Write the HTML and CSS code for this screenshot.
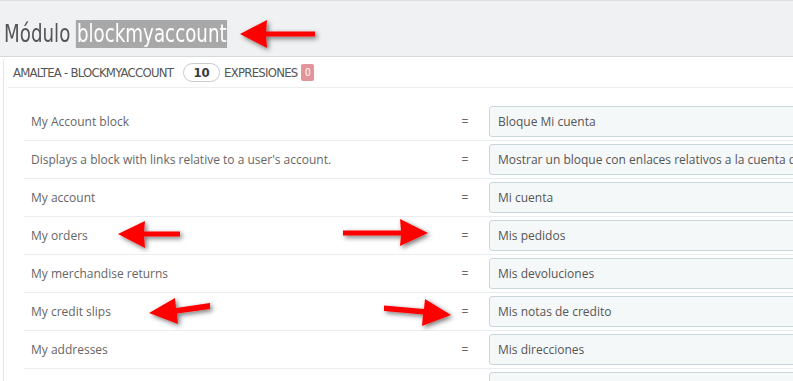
FILE: index.html
```html
<!DOCTYPE html>
<html lang="es">
<head>
    <meta charset="UTF-8">
    <title>Módulo blockmyaccount</title>
    <link rel="stylesheet" href="styles.css">
</head>
<body>
    <div class="page-head">
        <h2 class="page-title">Módulo <span class="hl">blockmyaccount</span></h2>
    </div>

    <div class="panel">
        <div class="panel-heading">
            <span>AMALTEA - BLOCKMYACCOUNT</span>
            <span class="badge-count">10</span>
            <span>EXPRESIONES</span>
            <span class="badge-red">0</span>
        </div>

        <div class="table">
            <div class="row">
                <div class="src">My Account block</div>
                <div class="eq">=</div>
                <div class="trans"><div class="input">Bloque Mi cuenta</div></div>
            </div>
            <div class="row">
                <div class="src">Displays a block with links relative to a user's account.</div>
                <div class="eq">=</div>
                <div class="trans"><div class="input">Mostrar un bloque con enlaces relativos a la cuenta d</div></div>
            </div>
            <div class="row">
                <div class="src">My account</div>
                <div class="eq">=</div>
                <div class="trans"><div class="input">Mi cuenta</div></div>
            </div>
            <div class="row">
                <div class="src">My orders</div>
                <div class="eq">=</div>
                <div class="trans"><div class="input">Mis pedidos</div></div>
            </div>
            <div class="row">
                <div class="src">My merchandise returns</div>
                <div class="eq">=</div>
                <div class="trans"><div class="input">Mis devoluciones</div></div>
            </div>
            <div class="row">
                <div class="src">My credit slips</div>
                <div class="eq">=</div>
                <div class="trans"><div class="input">Mis notas de credito</div></div>
            </div>
            <div class="row">
                <div class="src">My addresses</div>
                <div class="eq">=</div>
                <div class="trans"><div class="input">Mis direcciones</div></div>
            </div>
            <div class="row">
                <div class="src"></div>
                <div class="eq"></div>
                <div class="trans"><div class="input"></div></div>
            </div>
        </div>
    </div>

    <!-- red arrows drawn over the screenshot -->
    <svg class="arrows" width="793" height="381" viewBox="0 0 793 381">
        <defs>
            <filter id="shadow" x="-30%" y="-50%" width="160%" height="200%">
                <feDropShadow dx="2" dy="2" stdDeviation="2.5" flood-color="#000" flood-opacity="0.55"/>
            </filter>
        </defs>
        <g fill="#ff0000" filter="url(#shadow)">
            <polygon points="240,34 267,20 266,31.5 315,31.5 315,36.5 266,36.5 267,48"/>
            <polygon points="118,234 145,221 144,231.5 180,231.5 180,236.5 144,236.5 145,248"/>
            <polygon points="428,233 400,219 401,230.5 343,230.5 343,235.5 401,235.5 400,246"/>
            <polygon points="149,313 175,298 176,308 210,303 210,309 177,313.5 178,324"/>
            <polygon points="451,315 425,299 424,309 384,305.5 384,311 423,314.5 422,326"/>
        </g>
    </svg>
</body>
</html>
```

FILE: styles.css
```css
body {
    margin: 0;
    font-family: "Open Sans", Arial, sans-serif;
    font-size: 12px;
    color: #666;
    background-color: #fff;
    overflow: hidden;
    position: relative;
    width: 793px;
    height: 381px;
}
.page-head {
    height: 55px;
    background-color: #eff1f2;
    border-top: 1px solid #dde0e3;
    border-bottom: 1px solid #d6dadd;
    padding-left: 4px;
}
.page-title {
    margin: 0;
    padding-top: 19px;
    font-family: "DejaVu Sans Condensed", "DejaVu Sans", sans-serif;
    font-weight: normal;
    font-size: 24px;
    line-height: 28px;
    color: #555;
    transform: scaleX(0.845);
    transform-origin: left center;
    white-space: nowrap;
}
.hl {
    background-color: #a8a8a8;
    color: #fff;
    padding: 0 1px;
}
.panel {
    margin-left: 3px;
    width: 1000px;
    background-color: #fff;
    border-left: 1px solid #e3e6e8;
    border-top-left-radius: 5px;
}
.panel-heading {
    margin-left: 4px;
    height: 30px;
    padding-left: 5px;
    display: flex;
    align-items: center;
    gap: 6px;
    border-bottom: 1px solid #eceeef;
    font-family: "DejaVu Sans Condensed", "DejaVu Sans", sans-serif;
    font-size: 13px;
    letter-spacing: -0.75px;
    color: #555;
}
.badge-count {
    display: inline-block;
    width: 35px;
    height: 17px;
    line-height: 17px;
    margin: 0 -2px 0 4px;
    text-align: center;
    border: 1px solid #c7cbcd;
    border-radius: 10px;
    font-weight: bold;
    letter-spacing: 0;
    color: #363a41;
    font-size: 13px;
}
.badge-red {
    display: inline-block;
    width: 13px;
    height: 17px;
    line-height: 17px;
    text-align: center;
    border-radius: 2px;
    background-color: #e3959a;
    color: #fff;
    font-size: 10px;
    letter-spacing: 0;
    margin-left: -2px;
}
.table {
    margin-top: 15px;
    margin-left: 20px;
}
.row {
    display: grid;
    grid-template-columns: 430px 22px 1fr;
    align-items: center;
    height: 37px;
    border-bottom: 1px solid #eaedef;
}
.src {
    padding-left: 7px;
    color: #666;
}
.eq {
    text-align: center;
    color: #666;
}
.trans {
    padding-left: 13px;
}
.input {
    height: 29px;
    line-height: 29px;
    width: 420px;
    padding-left: 8px;
    white-space: nowrap;
    overflow: hidden;
    background-color: #f5f8f9;
    border: 1px solid #c7d7dc;
    border-radius: 3px;
    color: #555;
}
.arrows {
    position: absolute;
    top: 0;
    left: 0;
    pointer-events: none;
}
```
